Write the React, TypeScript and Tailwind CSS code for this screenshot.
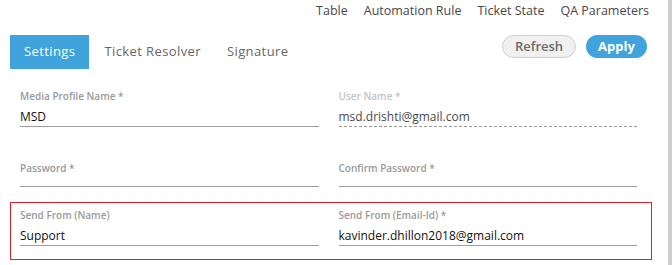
import React from "react";

const topLinks = ["Table", "Automation Rule", "Ticket State", "QA Parameters"];
const tabs = ["Settings", "Ticket Resolver", "Signature"];

function Field({
    label,
    value,
    disabled,
    dashed,
    tall = true,
}: {
    label: string;
    value?: string;
    disabled?: boolean;
    dashed?: boolean;
    tall?: boolean;
}) {
    return (
        <div className="flex flex-col">
            <label
                className={
                    "h-[16px] text-[10px] leading-[16px] font-semibold " +
                    (disabled ? "text-[#c4c4c4]" : "text-[#9a9a9a]")
                }
            >
                {label}
            </label>
            <div
                className={
                    (tall ? "h-[23px] pt-[2px] " : "h-[11px] ") +
                    "border-b text-[12px] leading-[21px] " +
                    (dashed
                        ? "border-dashed border-[#9a9a9a] text-[#4a4a4a]"
                        : "border-[#9e9e9e] text-[#111]")
                }
            >
                {value}
            </div>
        </div>
    );
}

export default function App() {
    return (
        <div className="flex h-[265px] w-[672px] bg-white font-['Open_Sans',sans-serif]">
            <div className="flex-1">
                {/* top links */}
                <div className="flex h-[22px] items-center justify-end gap-[16px] pr-[19px] text-[12.5px] text-[#474747]">
                    {topLinks.map((l) => (
                        <span key={l}>{l}</span>
                    ))}
                </div>

                {/* tabs + actions */}
                <div className="mt-[13px] flex items-start justify-between pl-[10px] pr-[21px]">
                    <div className="flex">
                        {tabs.map((t, i) => (
                            <div
                                key={t}
                                className={
                                    "flex h-[34px] items-center text-[13px] tracking-[0.4px] " +
                                    (i === 0
                                        ? "bg-[#40a3dc] px-[14px] text-white"
                                        : i === 1
                                          ? "pl-[15px] pr-[13px] text-[#666]"
                                          : "pl-[13px] text-[#666]")
                                }
                            >
                                {t}
                            </div>
                        ))}
                    </div>
                    <div className="flex gap-[10px]">
                        <button className="h-[23px] w-[74px] rounded-full border border-[#cfcfcf] bg-[#f0f0f0] text-[13px] font-semibold text-[#6a6a6a]">
                            Refresh
                        </button>
                        <button className="h-[23px] w-[61px] rounded-full bg-[#40a3dc] text-[13px] font-bold text-white">
                            Apply
                        </button>
                    </div>
                </div>

                {/* form */}
                <div className="mt-[19px] grid w-[637px] grid-cols-2 gap-x-[20px] pl-[20px]">
                    <Field label="Media Profile Name *" value="MSD" />
                    <Field label="User Name *" value="msd.drishti@gmail.com" disabled dashed />
                </div>
                <div className="mt-[33px] grid w-[637px] grid-cols-2 gap-x-[20px] pl-[20px]">
                    <Field label="Password *" tall={false} />
                    <Field label="Confirm Password *" tall={false} />
                </div>
                <div className="ml-[10px] mt-[15px] h-[58px] w-[642px] border border-[#e0202c] pl-[9px] pt-[4px]">
                    <div className="grid w-[617px] grid-cols-2 gap-x-[20px]">
                        <Field label="Send From (Name)" value="Support" />
                        <Field label="Send From (Email-Id) *" value="kavinder.dhillon2018@gmail.com" />
                    </div>
                </div>
            </div>
            <div className="h-full w-[4px] bg-[#cdcdcd]" />
        </div>
    );
}
